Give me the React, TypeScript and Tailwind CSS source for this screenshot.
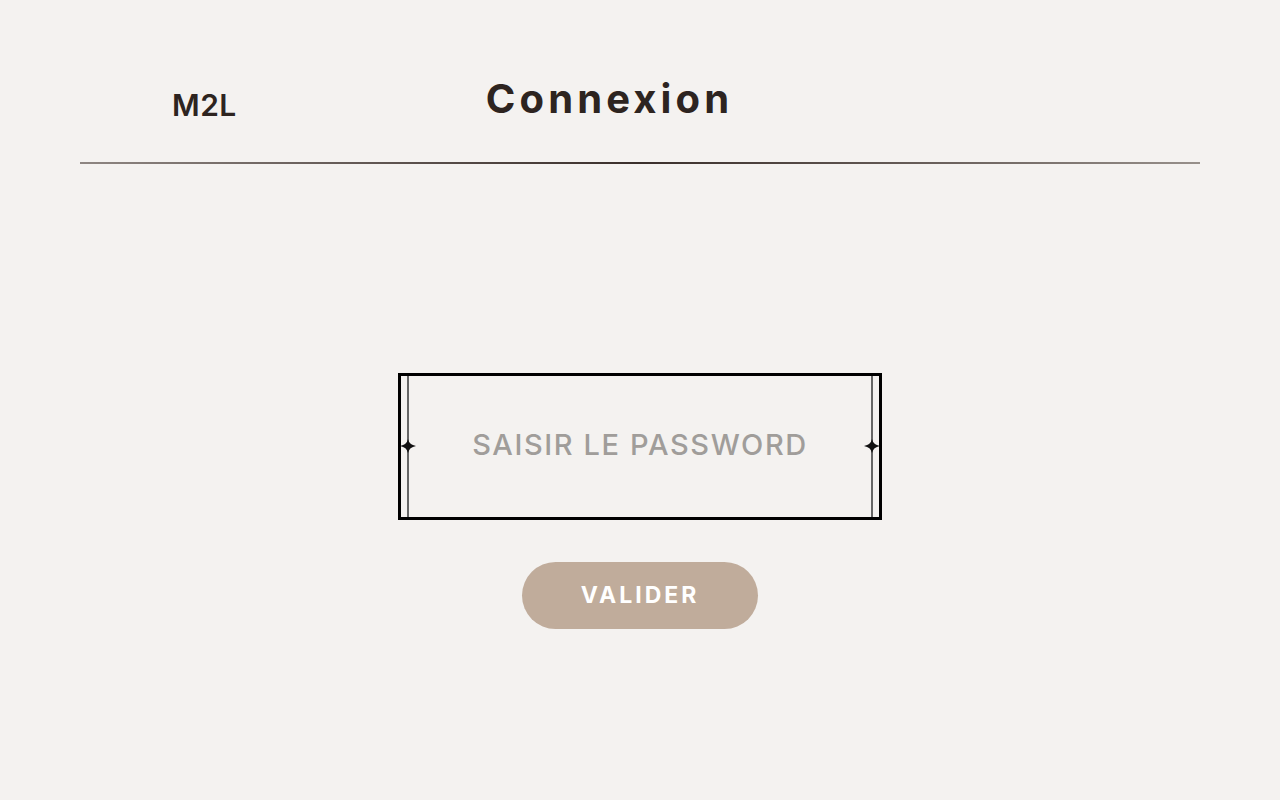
import React from 'react';

function Sparkle({ className }: { className?: string }) {
  return (
    <svg viewBox="0 0 16 14" className={className} width="16" height="14">
      <path d="M8 0 Q9.2 5.8 16 7 Q9.2 8.2 8 14 Q6.8 8.2 0 7 Q6.8 5.8 8 0 Z" fill="#111" />
    </svg>
  );
}

export default function App() {
  return (
    <div className="min-h-[800px] w-full bg-[#f4f2f0] font-['Inter',sans-serif] text-[#2d2420]">
      <header className="flex items-start">
        <div className="ml-[172px] mt-[90px] text-[30px] font-semibold leading-none tracking-[0.5px]">M2L</div>
        <h1 className="ml-[249px] mt-[79px] text-[40px] font-bold leading-none tracking-[4.1px]">Connexion</h1>
      </header>
      <div className="mx-20 mt-[42px] h-[2px] bg-gradient-to-r from-[#8e8682] via-[#3a2f2b] to-[#97908b]" />

      <main className="flex flex-col items-center pt-[209px]">
        <div className="relative flex h-[147px] w-[484px] items-center justify-center border-[3px] border-black">
          <div className="absolute inset-y-0 left-[6px] w-[2px] bg-[#666]" />
          <div className="absolute inset-y-0 right-[6px] w-[2px] bg-[#666]" />
          <Sparkle className="absolute left-[-1px] top-[63px]" />
          <Sparkle className="absolute right-[-1px] top-[63px]" />
          <input
            type="password"
            placeholder="SAISIR LE PASSWORD"
            className="w-full bg-transparent pb-[4px] text-center text-[29px] font-medium tracking-[1.6px] text-[#a09d9a] placeholder:text-[#a09d9a] outline-none"
          />
        </div>

        <button className="mt-[42px] h-[67px] w-[236px] rounded-full bg-[#c0ac9b] text-[23px] font-bold tracking-[3px] text-white">
          VALIDER
        </button>
      </main>
    </div>
  );
}
